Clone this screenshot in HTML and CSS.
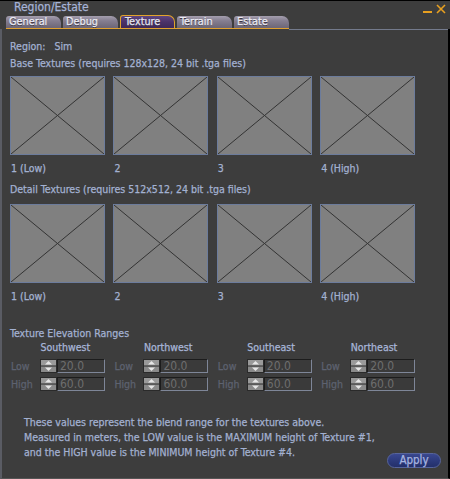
FILE: index.html
```html
<!DOCTYPE html>
<html>
<head>
<meta charset="utf-8">
<link rel="stylesheet" href="styles.css">
</head>
<body>
<div class="window">
  <div class="titlebar">
    <span class="title">Region/Estate</span>
    <svg class="controls" width="28" height="14" viewBox="0 0 28 14">
      <rect x="3" y="10" width="9" height="2" fill="#e8a020"/>
      <path d="M17 4 L25 12 M25 4 L17 12" stroke="#e8a020" stroke-width="1.6" fill="none"/>
    </svg>
  </div>
  <div class="tabrow">
    <div class="tabs">
      <div class="tab">General</div>
      <div class="tab">Debug</div>
      <div class="tab active">Texture</div>
      <div class="tab">Terrain</div>
      <div class="tab">Estate</div>
    </div>
    <div class="tabfill"></div>
  </div>
  <div class="panel">
    <div class="row region">Region:&nbsp;&nbsp; Sim</div>
    <div class="row label-base">Base Textures (requires 128x128, 24 bit .tga files)</div>
    <div class="swatches first">
      <div class="swatch"><svg viewBox="0 0 100 100" preserveAspectRatio="none"><path d="M0 0 L100 100 M100 0 L0 100" vector-effect="non-scaling-stroke"/></svg></div>
      <div class="swatch"><svg viewBox="0 0 100 100" preserveAspectRatio="none"><path d="M0 0 L100 100 M100 0 L0 100" vector-effect="non-scaling-stroke"/></svg></div>
      <div class="swatch"><svg viewBox="0 0 100 100" preserveAspectRatio="none"><path d="M0 0 L100 100 M100 0 L0 100" vector-effect="non-scaling-stroke"/></svg></div>
      <div class="swatch"><svg viewBox="0 0 100 100" preserveAspectRatio="none"><path d="M0 0 L100 100 M100 0 L0 100" vector-effect="non-scaling-stroke"/></svg></div>
    </div>
    <div class="swatch-labels">
      <div>1 (Low)</div><div>2</div><div>3</div><div>4 (High)</div>
    </div>
    <div class="row label-detail">Detail Textures (requires 512x512, 24 bit .tga files)</div>
    <div class="swatches second">
      <div class="swatch"><svg viewBox="0 0 100 100" preserveAspectRatio="none"><path d="M0 0 L100 100 M100 0 L0 100" vector-effect="non-scaling-stroke"/></svg></div>
      <div class="swatch"><svg viewBox="0 0 100 100" preserveAspectRatio="none"><path d="M0 0 L100 100 M100 0 L0 100" vector-effect="non-scaling-stroke"/></svg></div>
      <div class="swatch"><svg viewBox="0 0 100 100" preserveAspectRatio="none"><path d="M0 0 L100 100 M100 0 L0 100" vector-effect="non-scaling-stroke"/></svg></div>
      <div class="swatch"><svg viewBox="0 0 100 100" preserveAspectRatio="none"><path d="M0 0 L100 100 M100 0 L0 100" vector-effect="non-scaling-stroke"/></svg></div>
    </div>
    <div class="swatch-labels">
      <div>1 (Low)</div><div>2</div><div>3</div><div>4 (High)</div>
    </div>
    <div class="row label-elev">Texture Elevation Ranges</div>
    <div class="elev">
      <div class="corner">
        <div class="corner-name">Southwest</div>
        <div class="field low"><span class="flabel">Low</span><svg class="spin" width="17" height="14" viewBox="0 0 17 14"><rect x="0" y="0" width="17" height="14" fill="#2a2a2a"/><rect x="1" y="1" width="15" height="5.5" fill="#9a9a9a"/><rect x="1" y="7.5" width="15" height="5.5" fill="#8a8a8a"/><path d="M5 5.5 L8.5 2 L12 5.5 Z" fill="#e6e6e6"/><path d="M5 8.5 L8.5 12 L12 8.5 Z" fill="#e6e6e6"/></svg><span class="input">20.0</span></div>
        <div class="field"><span class="flabel">High</span><svg class="spin" width="17" height="14" viewBox="0 0 17 14"><rect x="0" y="0" width="17" height="14" fill="#2a2a2a"/><rect x="1" y="1" width="15" height="5.5" fill="#9a9a9a"/><rect x="1" y="7.5" width="15" height="5.5" fill="#8a8a8a"/><path d="M5 5.5 L8.5 2 L12 5.5 Z" fill="#e6e6e6"/><path d="M5 8.5 L8.5 12 L12 8.5 Z" fill="#e6e6e6"/></svg><span class="input">60.0</span></div>
      </div>
      <div class="corner">
        <div class="corner-name">Northwest</div>
        <div class="field low"><span class="flabel">Low</span><svg class="spin" width="17" height="14" viewBox="0 0 17 14"><rect x="0" y="0" width="17" height="14" fill="#2a2a2a"/><rect x="1" y="1" width="15" height="5.5" fill="#9a9a9a"/><rect x="1" y="7.5" width="15" height="5.5" fill="#8a8a8a"/><path d="M5 5.5 L8.5 2 L12 5.5 Z" fill="#e6e6e6"/><path d="M5 8.5 L8.5 12 L12 8.5 Z" fill="#e6e6e6"/></svg><span class="input">20.0</span></div>
        <div class="field"><span class="flabel">High</span><svg class="spin" width="17" height="14" viewBox="0 0 17 14"><rect x="0" y="0" width="17" height="14" fill="#2a2a2a"/><rect x="1" y="1" width="15" height="5.5" fill="#9a9a9a"/><rect x="1" y="7.5" width="15" height="5.5" fill="#8a8a8a"/><path d="M5 5.5 L8.5 2 L12 5.5 Z" fill="#e6e6e6"/><path d="M5 8.5 L8.5 12 L12 8.5 Z" fill="#e6e6e6"/></svg><span class="input">60.0</span></div>
      </div>
      <div class="corner">
        <div class="corner-name">Southeast</div>
        <div class="field low"><span class="flabel">Low</span><svg class="spin" width="17" height="14" viewBox="0 0 17 14"><rect x="0" y="0" width="17" height="14" fill="#2a2a2a"/><rect x="1" y="1" width="15" height="5.5" fill="#9a9a9a"/><rect x="1" y="7.5" width="15" height="5.5" fill="#8a8a8a"/><path d="M5 5.5 L8.5 2 L12 5.5 Z" fill="#e6e6e6"/><path d="M5 8.5 L8.5 12 L12 8.5 Z" fill="#e6e6e6"/></svg><span class="input">20.0</span></div>
        <div class="field"><span class="flabel">High</span><svg class="spin" width="17" height="14" viewBox="0 0 17 14"><rect x="0" y="0" width="17" height="14" fill="#2a2a2a"/><rect x="1" y="1" width="15" height="5.5" fill="#9a9a9a"/><rect x="1" y="7.5" width="15" height="5.5" fill="#8a8a8a"/><path d="M5 5.5 L8.5 2 L12 5.5 Z" fill="#e6e6e6"/><path d="M5 8.5 L8.5 12 L12 8.5 Z" fill="#e6e6e6"/></svg><span class="input">60.0</span></div>
      </div>
      <div class="corner">
        <div class="corner-name">Northeast</div>
        <div class="field low"><span class="flabel">Low</span><svg class="spin" width="17" height="14" viewBox="0 0 17 14"><rect x="0" y="0" width="17" height="14" fill="#2a2a2a"/><rect x="1" y="1" width="15" height="5.5" fill="#9a9a9a"/><rect x="1" y="7.5" width="15" height="5.5" fill="#8a8a8a"/><path d="M5 5.5 L8.5 2 L12 5.5 Z" fill="#e6e6e6"/><path d="M5 8.5 L8.5 12 L12 8.5 Z" fill="#e6e6e6"/></svg><span class="input">20.0</span></div>
        <div class="field"><span class="flabel">High</span><svg class="spin" width="17" height="14" viewBox="0 0 17 14"><rect x="0" y="0" width="17" height="14" fill="#2a2a2a"/><rect x="1" y="1" width="15" height="5.5" fill="#9a9a9a"/><rect x="1" y="7.5" width="15" height="5.5" fill="#8a8a8a"/><path d="M5 5.5 L8.5 2 L12 5.5 Z" fill="#e6e6e6"/><path d="M5 8.5 L8.5 12 L12 8.5 Z" fill="#e6e6e6"/></svg><span class="input">60.0</span></div>
      </div>
    </div>
    <div class="footer">
      <p class="note">These values represent the blend range for the textures above.<br>Measured in meters, the LOW value is the MAXIMUM height of Texture #1,<br>and the HIGH value is the MINIMUM height of Texture #4.</p>
      <button class="apply">Apply</button>
    </div>
  </div>
</div>
</body>
</html>
```
FILE: styles.css
```css
* { box-sizing: border-box; }
html, body { margin: 0; padding: 0; background: #3d3d3d; }
body {
  font-family: "DejaVu Sans Condensed", "DejaVu Sans", sans-serif;
  font-stretch: condensed;
  font-size: 10.5px;
  color: #a3b1d1;
  -webkit-text-stroke: 0.25px currentColor;
}
.window {
  width: 450px;
  height: 479px;
  background: #3d3d3d;
  border-top: 1px solid #000;
  display: flex;
  flex-direction: column;
  overflow: hidden;
}
.titlebar {
  height: 14px;
  display: flex;
  justify-content: space-between;
  align-items: flex-start;
  padding-left: 14px;
  padding-right: 2px;
}
.title {
  font-size: 12px;
  line-height: 13px;
  color: #a6b3d6;
}
.controls { display: block; }
.tabrow {
  height: 14px;
  display: flex;
  align-items: flex-end;
}
.tabs {
  display: flex;
  gap: 2px;
  margin-left: 6px;
  height: 14px;
  align-items: flex-end;
  border-bottom: 1px solid #e0a030;
}
.tab {
  width: 55px;
  height: 12px;
  padding-left: 3px;
  font-size: 10.8px;
  line-height: 12px;
  color: #ececf4;
  text-shadow: 0 1px 0 #3a3440;
  background: linear-gradient(#a49eae, #857e90 40%, #6c6676);
  border-radius: 3px 7px 0 0;
}
.tab.active {
  height: 13px;
  background: linear-gradient(#5e4680, #4a3168 50%, #3e2858);
  border: 1px solid #e2a32c;
  border-bottom: none;
  line-height: 12px;
  padding-left: 4px;
  color: #e4e4f0;
}
.tabfill {
  flex: 1;
  height: 1px;
  margin-bottom: -1px;
  background: #737a8c;
  margin-right: 1px;
}
.panel {
  flex: 1;
  border-left: 2px solid #5a5c64;
  border-right: 2px solid #000;
  border-bottom: 1px solid #555;
  padding-left: 8px;
}
.row { line-height: 14px; height: 14px; white-space: nowrap; }
.region { margin-top: 10px; }
.label-base { margin-top: 3px; }
.swatches {
  display: grid;
  grid-template-columns: repeat(4, 95px);
  column-gap: 8.4px;
}
.swatches.first { margin-top: 6px; }
.swatches.second { margin-top: 8px; }
.swatch {
  height: 79px;
  background: #808080;
  border: 1px solid #6c7c9c;
}
.swatch svg { display: block; width: 100%; height: 100%; }
.swatch path { stroke: #333; stroke-width: 1; fill: none; }
.swatch-labels {
  display: grid;
  grid-template-columns: repeat(4, 95px);
  column-gap: 8.4px;
  margin-top: 6px;
  line-height: 14px;
  padding-left: 1px;
}
.label-detail { margin-top: 7px; }
.label-elev { margin-top: 23px; }
.elev {
  display: grid;
  grid-template-columns: repeat(4, 103.4px);
}
.corner-name {
  padding-left: 30.5px;
  line-height: 14px;
  height: 14px;
  color: #a8b6d8;
}
.field {
  display: flex;
  align-items: center;
  height: 14px;
  margin-top: 4px;
}
.field.low { margin-top: 5px; }
.flabel {
  width: 30px;
  color: #5d6270;
  line-height: 14px;
  padding-left: 1px;
}
.spin { display: block; flex: none; }
.input {
  width: 48px;
  height: 14px;
  background: #3a3a3a;
  border-top: 1px solid #1c1c1c;
  border-left: 1px solid #1c1c1c;
  border-right: 1px solid #7e8698;
  border-bottom: 1px solid #7e8698;
  color: #6e6e6e;
  -webkit-text-stroke: 0;
  font-size: 12px;
  line-height: 12px;
  padding-left: 2px;
}
.footer {
  display: flex;
  align-items: flex-start;
  margin-top: 24px;
}
.note {
  margin: 0;
  padding-left: 14px;
  line-height: 15px;
  width: 377px;
  white-space: nowrap;
}
.apply {
  margin-top: 38px;
  width: 54px;
  height: 15px;
  padding: 0;
  font-family: inherit;
  font-stretch: condensed;
  font-size: 11.5px;
  line-height: 13px;
  color: #a6b4e0;
  background: linear-gradient(#3a4890, #2a3878 60%, #24306a);
  border: 1px solid #56649c;
  border-radius: 8px;
}
```
